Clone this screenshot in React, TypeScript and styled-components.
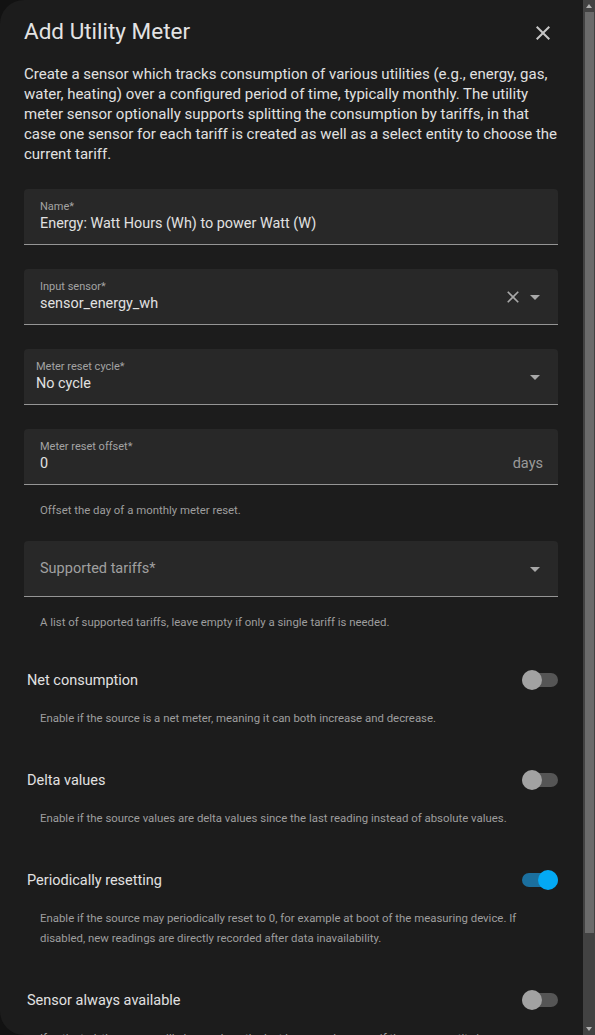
import React from "react";
import styled, { createGlobalStyle } from "styled-components";

const GlobalStyle = createGlobalStyle`
  html, body { margin: 0; padding: 0; background: #121212; }
  body { font-family: Roboto, "Noto Sans", sans-serif; -webkit-font-smoothing: antialiased; }
  * { box-sizing: border-box; }
`;

const Page = styled.div`
  display: flex;
  height: 1035px;
  overflow: hidden;
`;

const Dialog = styled.section`
  flex: 1;
  min-width: 0;
  background: #1c1c1c;
  border-radius: 24px 0 0 24px;
  padding: 15px 25px 0 24px;
  overflow: hidden;
  color: #e1e1e1;
`;

const Header = styled.header`
  display: flex;
  justify-content: space-between;
  align-items: flex-start;
`;

const Title = styled.h2`
  margin: 0;
  font-size: 22.5px;
  line-height: 32px;
  font-weight: 400;
  color: #e3e3e3;
`;

const IconButton = styled.button`
  width: 24px;
  height: 24px;
  margin: 6px 3px 0 0;
  padding: 0;
  border: 0;
  background: none;
  color: #c6c6c6;
  display: flex;
  align-items: center;
  justify-content: center;
`;

const Description = styled.p`
  margin: 17px 0 0;
  font-size: 15px;
  line-height: 20px;
  color: #e1e1e1;
`;

const Form = styled.div`
  display: flex;
  flex-direction: column;
  margin-top: 25px;
`;

const Field = styled.div<{ $pad: number; $gap: number }>`
  height: 56px;
  margin-top: ${(p) => p.$gap}px;
  background: #282828;
  border-radius: 4px 4px 0 0;
  border-bottom: 1px solid #959595;
  display: flex;
  align-items: center;
  padding: 0 11px 0 ${(p) => p.$pad}px;
  &:first-child { margin-top: 0; }
`;

const FieldBody = styled.div`
  flex: 1;
  min-width: 0;
  display: flex;
  flex-direction: column;
`;

const FieldLabel = styled.span`
  font-size: 11px;
  line-height: 14px;
  color: #a3a3a3;
`;

const FieldValue = styled.span`
  font-size: 14.4px;
  line-height: 20px;
  color: #e1e1e1;
`;

const Placeholder = styled.span`
  font-size: 14.5px;
  line-height: 20px;
  color: #a0a0a0;
`;

const Suffix = styled.span`
  font-size: 14.5px;
  line-height: 20px;
  color: #9a9a9a;
  margin: 14px 4px 0 0;
`;

const FieldIcons = styled.div`
  display: flex;
  align-items: center;
  color: #a8a8a8;
`;

const Helper = styled.div<{ $gap: number }>`
  margin-top: ${(p) => p.$gap}px;
  padding: 0 16px;
  font-size: 11.4px;
  line-height: 20px;
  color: #9e9e9e;
`;

const SettingRow = styled.div<{ $gap: number }>`
  margin-top: ${(p) => p.$gap}px;
  height: 48px;
  padding-left: 3px;
  display: flex;
  align-items: center;
  justify-content: space-between;
`;

const RowLabel = styled.span`
  font-size: 14.5px;
  color: #e1e1e1;
`;

const SwitchTrack = styled.div<{ $on: boolean }>`
  width: 36px;
  height: 14px;
  border-radius: 7px;
  background: ${(p) => (p.$on ? "#1b6f9e" : "#555555")};
  display: flex;
  align-items: center;
  justify-content: ${(p) => (p.$on ? "flex-end" : "flex-start")};
`;

const SwitchThumb = styled.span<{ $on: boolean }>`
  width: 20px;
  height: 20px;
  flex-shrink: 0;
  border-radius: 50%;
  background: ${(p) => (p.$on ? "#03a9f4" : "#a2a2a2")};
`;

const ScrollBar = styled.div`
  width: 12px;
  flex-shrink: 0;
  background: #424242;
  display: flex;
  flex-direction: column;
`;

const ScrollButton = styled.div`
  height: 12px;
  display: flex;
  align-items: center;
  justify-content: center;
`;

const Arrow = styled.span<{ $down?: boolean }>`
  width: 0;
  height: 0;
  border-left: 3.5px solid transparent;
  border-right: 3.5px solid transparent;
  ${(p) =>
    p.$down ? "border-top: 4px solid #b0b0b0;" : "border-bottom: 4px solid #b0b0b0;"}
`;

const ScrollThumb = styled.div`
  height: 921px;
  margin: 0 1px 0 2px;
  background: #6b6b6b;
`;

const ScrollSpacer = styled.div`
  flex: 1;
`;

const CloseIcon = ({ size }: { size: number }) => (
  <svg width={size} height={size} viewBox="0 0 24 24" fill="currentColor">
    <path d="M19,6.41L17.59,5L12,10.59L6.41,5L5,6.41L10.59,12L5,17.59L6.41,19L12,13.41L17.59,19L19,17.59L13.41,12L19,6.41Z" />
  </svg>
);

const MenuDown = () => (
  <svg width={24} height={24} viewBox="0 0 24 24" fill="currentColor">
    <path d="M7,10L12,15L17,10H7Z" />
  </svg>
);

const Switch = ({ on }: { on: boolean }) => (
  <SwitchTrack $on={on}>
    <SwitchThumb $on={on} />
  </SwitchTrack>
);

const toggles = [
  {
    label: "Net consumption",
    helper: "Enable if the source is a net meter, meaning it can both increase and decrease.",
    on: false,
  },
  {
    label: "Delta values",
    helper: "Enable if the source values are delta values since the last reading instead of absolute values.",
    on: false,
  },
  {
    label: "Periodically resetting",
    helper:
      "Enable if the source may periodically reset to 0, for example at boot of the measuring device. If disabled, new readings are directly recorded after data inavailability.",
    on: true,
  },
  {
    label: "Sensor always available",
    helper:
      "If activated, the sensor will always show the last known value, even if the source entity is unavailable or unknown.",
    on: false,
  },
];

export default function App() {
  return (
    <>
      <GlobalStyle />
      <Page>
        <Dialog>
          <Header>
            <Title>Add Utility Meter</Title>
            <IconButton aria-label="Close">
              <CloseIcon size={24} />
            </IconButton>
          </Header>
          <Description>
            Create a sensor which tracks consumption of various utilities (e.g., energy, gas,
            water, heating) over a configured period of time, typically monthly. The utility
            meter sensor optionally supports splitting the consumption by tariffs, in that case
            one sensor for each tariff is created as well as a select entity to choose the current
            tariff.
          </Description>
          <Form>
            <Field $pad={16} $gap={0}>
              <FieldBody>
                <FieldLabel>Name*</FieldLabel>
                <FieldValue>Energy: Watt Hours (Wh) to power Watt (W)</FieldValue>
              </FieldBody>
            </Field>
            <Field $pad={16} $gap={24}>
              <FieldBody>
                <FieldLabel>Input sensor*</FieldLabel>
                <FieldValue>sensor_energy_wh</FieldValue>
              </FieldBody>
              <FieldIcons>
                <CloseIcon size={20} />
                <MenuDown />
              </FieldIcons>
            </Field>
            <Field $pad={12} $gap={24}>
              <FieldBody>
                <FieldLabel>Meter reset cycle*</FieldLabel>
                <FieldValue>No cycle</FieldValue>
              </FieldBody>
              <FieldIcons>
                <MenuDown />
              </FieldIcons>
            </Field>
            <Field $pad={16} $gap={24}>
              <FieldBody>
                <FieldLabel>Meter reset offset*</FieldLabel>
                <FieldValue>0</FieldValue>
              </FieldBody>
              <Suffix>days</Suffix>
            </Field>
            <Helper $gap={15}>Offset the day of a monthly meter reset.</Helper>
            <Field $pad={16} $gap={21}>
              <FieldBody>
                <Placeholder>Supported tariffs*</Placeholder>
              </FieldBody>
              <FieldIcons>
                <MenuDown />
              </FieldIcons>
            </Field>
            <Helper $gap={15}>
              A list of supported tariffs, leave empty if only a single tariff is needed.
            </Helper>
            {toggles.map((t, i) => (
              <React.Fragment key={t.label}>
                <SettingRow $gap={i === 0 ? 24 : 28}>
                  <RowLabel>{t.label}</RowLabel>
                  <Switch on={t.on} />
                </SettingRow>
                <Helper $gap={4}>{t.helper}</Helper>
              </React.Fragment>
            ))}
          </Form>
        </Dialog>
        <ScrollBar>
          <ScrollButton>
            <Arrow />
          </ScrollButton>
          <ScrollThumb />
          <ScrollSpacer />
          <ScrollButton>
            <Arrow $down />
          </ScrollButton>
        </ScrollBar>
      </Page>
    </>
  );
}
